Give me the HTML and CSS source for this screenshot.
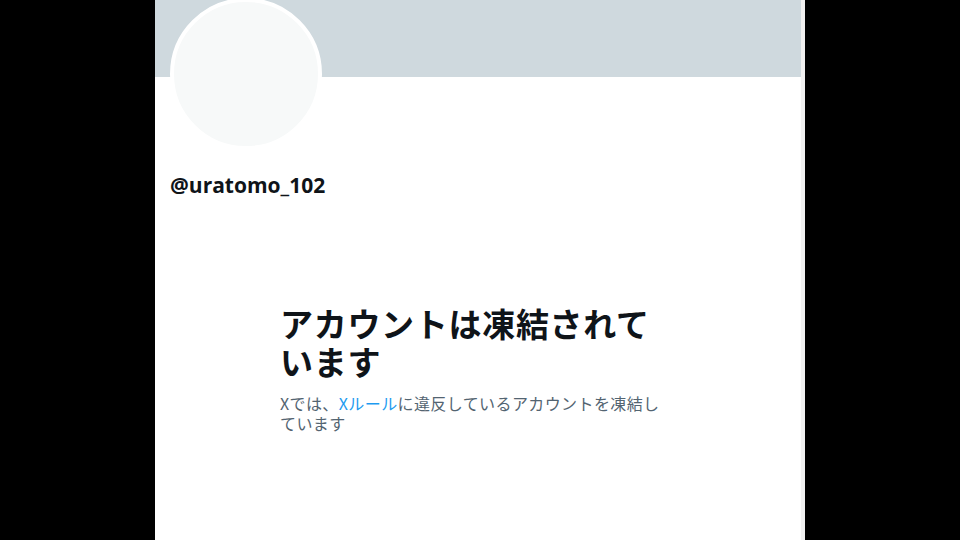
FILE: index.html
```html
<!DOCTYPE html>
<html lang="ja">
<head>
<meta charset="utf-8">
<title>@uratomo_102</title>
<link rel="stylesheet" href="styles.css">
</head>
<body>
<main class="column">
  <div class="banner"></div>
  <div class="avatar"></div>
  <div class="handle">@uratomo_102</div>
  <section class="empty">
    <h1 class="empty-title">アカウントは凍結されています</h1>
    <p class="empty-text"><span>Xでは、</span><a class="link" href="#">Xルール</a><span>に違反しているアカウントを凍結し</span><span>ています</span></p>
  </section>
</main>
</body>
</html>
```
FILE: styles.css
```css
html, body {
  margin: 0;
  padding: 0;
  background: #000;
  height: 100%;
  overflow: hidden;
}
.column {
  width: 646px;
  height: 540px;
  margin-left: 155px;
  background: #fff;
  border-right: 4px solid #f1f1f1;
  display: flex;
  flex-direction: column;
}
.banner {
  height: 77px;
  background: #cfd9de;
  flex: none;
}
.avatar {
  flex: none;
  width: 144px;
  height: 144px;
  margin: -79px 0 0 15px;
  border-radius: 50%;
  border: 4px solid #fff;
  background: #f7f9f9;
}
.handle {
  margin: 23px 0 0 15px;
  font-family: "Open Sans", "Noto Sans", sans-serif;
  font-weight: 700;
  font-size: 21px;
  line-height: 24px;
  color: #0f1419;
}
.empty {
  margin: 107px 0 0 125px;
  width: 392px;
}
.empty-title {
  margin: 0;
  font-family: "Noto Sans CJK JP", sans-serif;
  font-weight: 700;
  font-size: 33px;
  letter-spacing: 0.7px;
  line-height: 38px;
  color: #0f1419;
}
.empty-text {
  margin: 13px 0 0;
  font-family: "Noto Sans CJK JP", sans-serif;
  font-size: 16px;
  letter-spacing: 0.4px;
  line-height: 20px;
  color: #536471;
}
.link {
  color: #1d9bf0;
  text-decoration: none;
}
```
